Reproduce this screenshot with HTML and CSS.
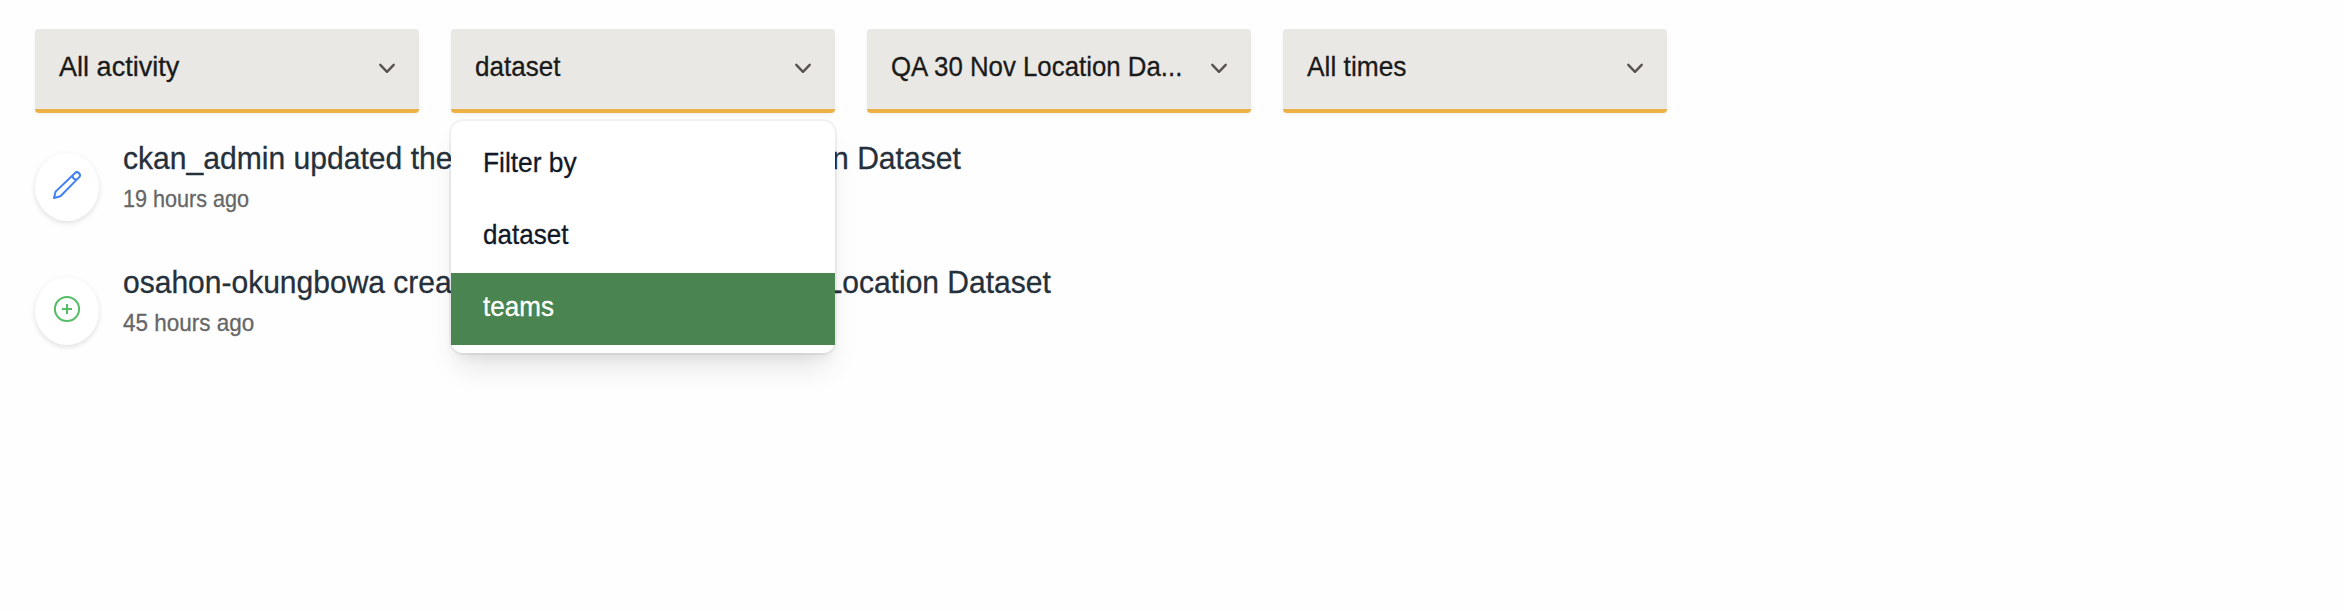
FILE: index.html
```html
<!DOCTYPE html>
<html lang="en">
<head>
<meta charset="utf-8">
<title>Activity</title>
<link rel="stylesheet" href="styles.css">
</head>
<body>
<main class="page">
  <div class="filters">
    <div class="select">
      <span class="label w-activity">All activity</span>
      <svg class="chevron" viewBox="0 0 20 14"><path d="M3.300 2.800 10 9.800l6.700-7"/></svg>
    </div>
    <div class="select">
      <span class="label w-dataset">dataset</span>
      <svg class="chevron" viewBox="0 0 20 14"><path d="M3.300 2.800 10 9.800l6.700-7"/></svg>
      <ul class="menu">
        <li class="option"><span class="label w-filter">Filter by</span></li>
        <li class="option"><span class="label w-dataset">dataset</span></li>
        <li class="option active"><span class="label w-dataset">teams</span></li>
      </ul>
    </div>
    <div class="select">
      <span class="label w-location">QA 30 Nov Location Da...</span>
      <svg class="chevron" viewBox="0 0 20 14"><path d="M3.300 2.800 10 9.800l6.700-7"/></svg>
    </div>
    <div class="select">
      <span class="label w-times">All times</span>
      <svg class="chevron" viewBox="0 0 20 14"><path d="M3.300 2.800 10 9.800l6.700-7"/></svg>
    </div>
  </div>
  <div class="feed">
    <article class="item">
      <div class="badge">
        <svg class="icon edit" viewBox="0 0 28 28"><path d="M1 27 2.600 20.600 21.800 2.200a2.950 2.950 0 0 1 4.200 4.200L7.400 25.200ZM19.600 4.300c-.3 2.600 1.600 4.500 4.200 4.200"/></svg>
      </div>
      <div class="body">
        <div class="title updated">ckan_admin updated the<span class="subject"> dataset QA 30 Nov </span>Location Dataset</div>
        <div class="time w-19">19 hours ago</div>
      </div>
    </article>
    <article class="item">
      <div class="badge">
        <svg class="icon add" viewBox="0 0 28 28"><circle cx="14" cy="14" r="12.100"/><path d="M14 9v10M9 14h10"/></svg>
      </div>
      <div class="body">
        <div class="title">osahon-okungbowa created the<span class="subject"> dataset QA 30 Nov </span>Location Dataset</div>
        <div class="time w-45">45 hours ago</div>
      </div>
    </article>
  </div>
</main>
</body>
</html>
```
FILE: styles.css
```css
* { box-sizing: border-box; }
body {
  margin: 0;
  background: #fefefe;
  font-family: "Liberation Sans", Arial, sans-serif;
  -webkit-text-stroke: .3px currentColor;
}
.page { padding: 29px 35px; }
.filters { display: flex; gap: 32px; }
.select {
  position: relative;
  display: flex;
  align-items: center;
  justify-content: space-between;
  width: 384px;
  height: 84px;
  padding: 0 22px 5px 24px;
  background: #e9e8e4;
  border-bottom: 4px solid #ebb243;
  border-radius: 4px;
  box-shadow: 0 2px 4px rgba(0, 0, 0, .05);
  color: #1a1a1a;
}
.label {
  display: inline-block;
  font-size: 28px;
  line-height: 40px;
  white-space: nowrap;
  transform-origin: left center;
}
.w-activity { transform: scaleX(.967); }
.w-dataset { transform: scaleX(.93); }
.w-filter { transform: scaleX(.94); }
.w-location { transform: scaleX(.922); margin-right: -30px; }
.w-times { transform: scaleX(.94); }
.chevron {
  flex: none;
  width: 20px;
  height: 14px;
  margin-top: 5px;
  fill: none;
  stroke: #57534e;
  stroke-width: 2.4;
  stroke-linecap: round;
  stroke-linejoin: round;
}
.menu {
  position: absolute;
  z-index: 2;
  top: 92px;
  left: 0;
  width: 384px;
  margin: 0;
  padding: 8px 0;
  list-style: none;
  background: #fff;
  border-radius: 12px;
  box-shadow: 0 0 0 2px rgba(0, 0, 0, .05), 0 20px 30px -6px rgba(0, 0, 0, .1), 0 8px 12px -4px rgba(0, 0, 0, .06);
  color: #111827;
}
.option {
  display: flex;
  align-items: center;
  height: 72px;
  padding: 0 32px 5px;
}
.option.active { background: #4a8551; color: #fff; }
.feed { padding-top: 21px; }
.item {
  display: flex;
  gap: 24px;
  height: 124px;
}
.badge {
  display: flex;
  align-items: center;
  justify-content: center;
  width: 64px;
  height: 68px;
  margin-top: 19px;
  padding-bottom: 4px;
  background: #fff;
  border-radius: 50%;
  box-shadow: 0 2px 6px rgba(0, 0, 0, .08), 0 2px 4px rgba(0, 0, 0, .05);
}
.icon { width: 28px; height: 28px; fill: none; stroke-width: 2; stroke-linejoin: round; }
.edit { stroke: #4180f5; }
.add { stroke: #55bd65; }
.title {
  font-size: 32px;
  line-height: 48px;
  color: #25303b;
  white-space: nowrap;
  transform: scaleX(.938);
  transform-origin: left center;
}
.title.updated { transform: scaleX(.94); }
.subject { letter-spacing: .75px; }
.time {
  margin-top: 1px;
  font-size: 24px;
  line-height: 32px;
  color: #666;
  transform-origin: left center;
}
.w-19 { transform: scaleX(.9); }
.w-45 { transform: scaleX(.937); }
```
